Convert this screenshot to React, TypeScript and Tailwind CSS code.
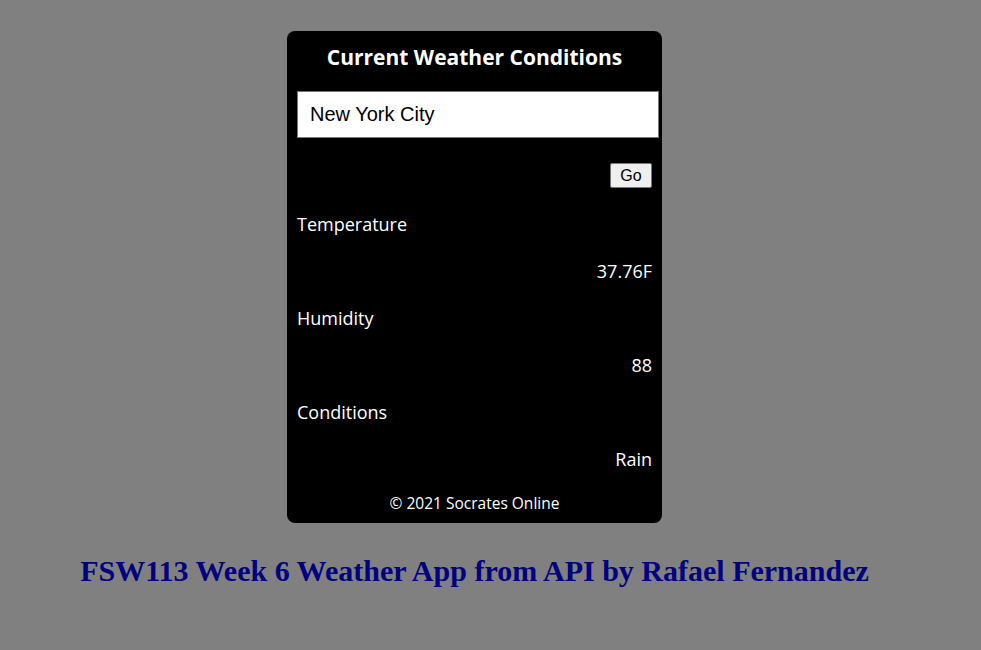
const rows = [
  { label: "Temperature", value: "37.76F" },
  { label: "Humidity", value: "88" },
  { label: "Conditions", value: "Rain" },
];

export default function App() {
  return (
    <div className="min-h-[650px] w-full bg-[#808080]">
      <div className="flex w-[949px] flex-col items-center pt-[31px]">
        <div className="w-[375px] rounded-lg bg-black pl-[10px] pr-[10px] pb-[9px] font-['Open_Sans',sans-serif] text-white">
          <h1 className="pt-[11px] text-center text-[21px] font-bold leading-[30px]">
            Current Weather Conditions
          </h1>
          <input
            className="mt-[19px] block h-[47px] w-[362px] border border-[#767676] bg-white px-3 font-['Liberation_Sans',sans-serif] text-[20px] text-black outline-none"
            defaultValue="New York City"
          />
          <div className="flex justify-end pt-[25px]">
            <button className="h-[25px] w-[42px] rounded-[2px] border border-[#767676] bg-[#efefef] font-['Liberation_Sans',sans-serif] text-[16px] leading-none text-black">
              Go
            </button>
          </div>
          <div className="pt-[24px]">
            {rows.map((r) => (
              <div key={r.label}>
                <div className="h-[47px] text-[18px] leading-[25px]">{r.label}</div>
                <div className="h-[47px] text-right text-[18px] leading-[25px]">{r.value}</div>
              </div>
            ))}
          </div>
          <p className="-mt-[2px] text-center text-[15.5px] leading-[22px]">© 2021 Socrates Online</p>
        </div>
        <h2 className="mt-[25px] font-['Liberation_Serif',serif] text-[30px] font-bold text-[#000080]">
          FSW113 Week 6 Weather App from API by Rafael Fernandez
        </h2>
      </div>
    </div>
  );
}
